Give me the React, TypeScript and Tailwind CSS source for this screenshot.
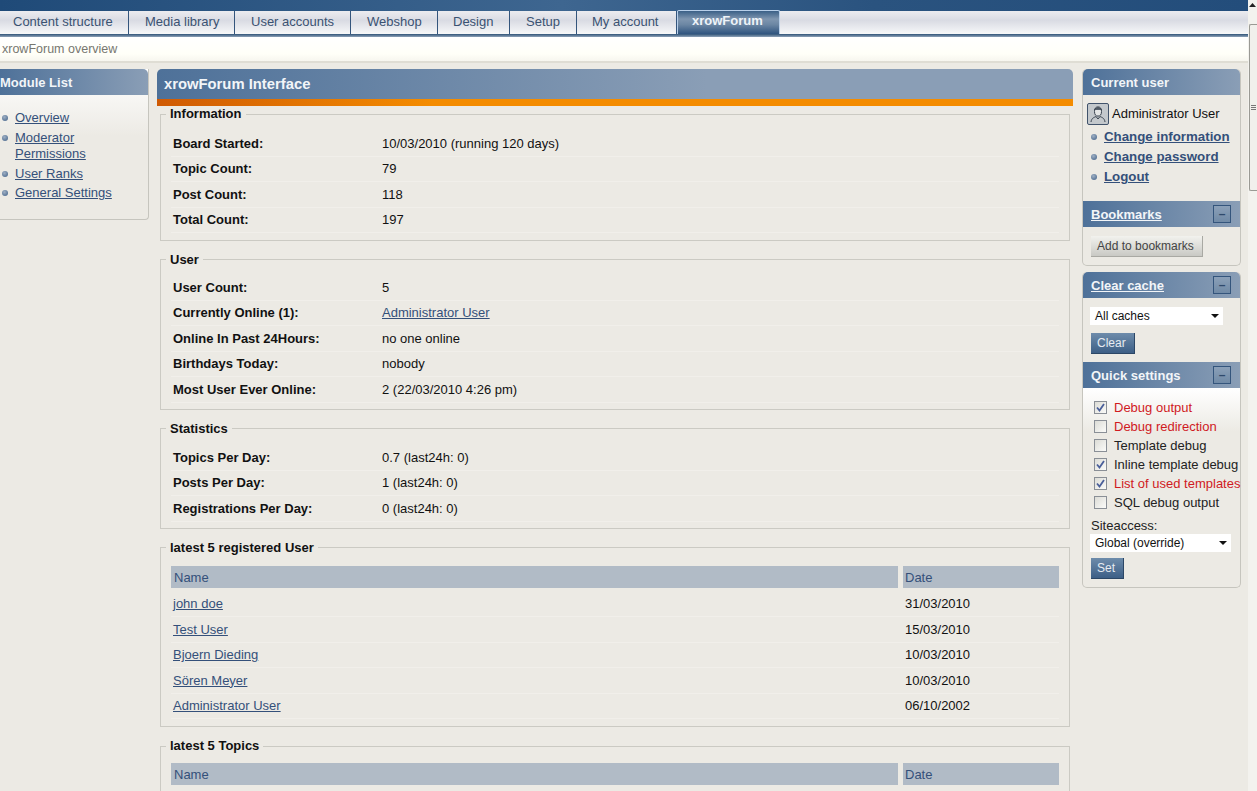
const FONT = "font-['Liberation_Sans',Arial,sans-serif]";

const tabs = [
  { label: "Content structure", cls: "w-[129px] pl-[13px]" },
  { label: "Media library", cls: "w-[106px] pl-[16px]" },
  { label: "User accounts", cls: "w-[116px] pl-[16px]" },
  { label: "Webshop", cls: "w-[87px] pl-[16px]" },
  { label: "Design", cls: "w-[72px] pl-[15px]" },
  { label: "Setup", cls: "w-[67px] pl-[16px]" },
  { label: "My account", cls: "w-[100px] pl-[15px]" },
];

function Bullet() {
  return (
    <span className="block w-[6px] h-[6px] rounded-full shrink-0 bg-[radial-gradient(circle_at_40%_35%,#9fb0c4,#3f5f86)]" />
  );
}

function TabBar() {
  return (
    <div className="h-[23px] flex items-stretch bg-[linear-gradient(#ececf0,#d9dbe3_40%,#f7f8f9)]">
      {tabs.map((t) => (
        <div
          key={t.label}
          className={`flex items-center pb-[2px] border-r border-[#34557c] text-[#3a5272] text-[13px] ${t.cls}`}
        >
          {t.label}
        </div>
      ))}
      <div className="w-[103px] flex items-center pl-[14px] pb-[3px] -mt-[1px] font-bold text-[13px] text-[#eef3f8] rounded-t-[2px] border-x border-t border-[#b9d0ea] bg-[linear-gradient(#3b6087,#7f96b0_35%,#6b86a3_60%,#2f547f)]">
        xrowForum
      </div>
    </div>
  );
}

function Row({ label, value, link }: { label: string; value: string; link?: boolean }) {
  return (
    <div className="h-[25.4px] flex items-center border-b border-[#f1efea] text-[13px] text-[#111]">
      <div className="w-[211px] pl-[2px] font-bold shrink-0">{label}</div>
      {link ? <a className="text-[#34507a] underline">{value}</a> : <div>{value}</div>}
    </div>
  );
}

function Section({ title, className, children }: { title: string; className?: string; children: React.ReactNode }) {
  return (
    <fieldset className={`mx-[3px] mb-[11px] pl-[10px] pr-[10px] border border-[#cbcac3] ${className ?? "pb-[6px]"}`}>
      <legend className="-ml-[5px] px-[4px] font-bold text-[13px] leading-[16px] text-[#111]">{title}</legend>
      {children}
    </fieldset>
  );
}

function TableHead({ className }: { className: string }) {
  return (
    <div className={`flex gap-[5px] text-[13px] text-[#34507a] ${className}`}>
      <div className="w-[727px] h-[22px] pl-[3px] pt-[2px] flex items-center bg-[#b1bbc6]">Name</div>
      <div className="flex-1 h-[22px] pl-[2px] pt-[2px] flex items-center bg-[#b1bbc6]">Date</div>
    </div>
  );
}

function DateRow({ name, date }: { name: string; date: string }) {
  return (
    <div className="h-[25.5px] flex items-center border-b border-[#f1efea] text-[13px]">
      <a className="w-[732px] pl-[2px] shrink-0">
        <span className="text-[#34507a] underline">{name}</span>
      </a>
      <div className="pl-[2px] text-[#111]">{date}</div>
    </div>
  );
}

function Collapse() {
  return (
    <span className="w-[18px] h-[18px] flex items-center justify-center border border-[#34557c] bg-[linear-gradient(#8ba0b8,#708aa6)] text-[#2f4a6c] text-[12px] leading-none">
      –
    </span>
  );
}

function SideHead({ title, link, collapse, rounded }: { title: string; link?: boolean; collapse?: boolean; rounded?: boolean }) {
  return (
    <div className={`h-[26px] pl-[8px] pr-[9px] flex items-center justify-between font-bold text-[13px] text-[#f2f5f8] bg-[linear-gradient(90deg,#4e7199,#8a9eb6)] ${rounded ? "rounded-t-[5px]" : ""}`}>
      <span className={`pt-px ${link ? "underline" : ""}`}>{title}</span>
      {collapse && <Collapse />}
    </div>
  );
}

function Check({ checked, label, red }: { checked?: boolean; label: string; red?: boolean }) {
  return (
    <div className={`h-[19px] flex items-center gap-[7px] whitespace-nowrap text-[13px] ${red ? "text-[#d01a1f]" : "text-[#222]"}`}>
      <span className="w-[13px] h-[13px] shrink-0 flex items-center justify-center border border-[#8a8f96] bg-[linear-gradient(135deg,#dcdcd6,#fbfbf9)]">
        {checked && (
          <svg width="9" height="9" viewBox="0 0 9 9">
            <path d="M1 4.5 L3.5 7.5 L8 1" fill="none" stroke="#4a5f9a" strokeWidth="1.8" />
          </svg>
        )}
      </span>
      {label}
    </div>
  );
}

function FakeSelect({ value, width }: { value: string; width: string }) {
  return (
    <div className={`${width} h-[18px] pl-[5px] pr-[4px] flex items-center justify-between bg-white text-[12px] text-[#111]`}>
      {value}
      <svg width="8" height="4" viewBox="0 0 8 4">
        <path d="M0 0 H8 L4 4 Z" fill="#111" />
      </svg>
    </div>
  );
}

function BlueButton({ label }: { label: string }) {
  return (
    <div className="inline-flex h-[21px] pl-[6px] pr-[8px] items-center text-[12px] text-[#e6ebf1] border-r border-b border-[#2c4766] bg-[linear-gradient(#6e8cab,#3d5f86)]">
      {label}
    </div>
  );
}

function Avatar() {
  return (
    <span className="w-[22px] h-[22px] flex items-center justify-center rounded-[2px] border border-[#41536b] bg-[#c3c8cc]">
      <svg width="18" height="18" viewBox="0 0 18 18" fill="none" stroke="#39434f" strokeWidth="1">
        <ellipse cx="9" cy="6.5" rx="3.5" ry="4.6" fill="#e4e6e6" />
        <path d="M5.5 5 C6 2 12 2 12.5 5" fill="#59636e" />
        <path d="M2 17 C2.5 13 5 12.5 7 11.5 L9 14 L11 11.5 C13 12.5 15.5 13 16 17" />
      </svg>
    </span>
  );
}

function Scrollbar() {
  return (
    <div className="w-[9px] shrink-0 bg-[#f3f2ee] flex flex-col items-stretch">
      <div className="h-[24px] flex justify-center pt-[3px]">
        <svg width="7" height="4" viewBox="0 0 7 4">
          <path d="M0 4 L3.5 0 L7 4 Z" fill="#222" />
        </svg>
      </div>
      <div className="h-[167px] ml-[1px] rounded-l-[2px] border border-r-0 border-[#9a9a94] bg-[#f1f0ec] flex flex-col items-center justify-center gap-[1px]">
        <span className="w-[5px] h-px bg-[#777]" />
        <span className="w-[5px] h-px bg-[#777]" />
        <span className="w-[5px] h-px bg-[#777]" />
      </div>
    </div>
  );
}

function ModuleItem({ className, children }: { className: string; children: React.ReactNode }) {
  return (
    <li className={`flex items-start gap-[7px] pl-[2px] ${className}`}>
      <span className="block pt-[5px]"><Bullet /></span>
      <a className="underline">{children}</a>
    </li>
  );
}

export default function App() {
  return (
    <div className={`${FONT} h-[791px] w-[1257px] overflow-hidden flex bg-[#eceae4]`}>
      <div className="w-[1248px] shrink-0">
        <div className="h-[11px] bg-[linear-gradient(90deg,#1f4a78,#3e6690_45%,#2a537f_70%,#234d7b)]" />
        <TabBar />
        <div className="h-[3px] bg-[linear-gradient(#2f5378,#8fa3b8)]" />
        <div className="h-[24px] pl-[2px] flex items-center text-[12.5px] text-[#777770] bg-[linear-gradient(#ffffff,#fffff8_70%,#f7f6ef)]">
          xrowForum overview
        </div>
        <div className="h-[2px] bg-[#dfddd4]" />
        <div className="h-[6px]" />

        <div className="flex items-start">
          <aside className="w-[149px] h-[151px] shrink-0 border-r border-b border-[#c6c5be] rounded-br-[4px] bg-[linear-gradient(#ffffff,#eceae4_45%)]">
            <div className="h-[26px] pt-px flex items-center font-bold text-[13px] text-[#f2f5f8] rounded-tr-[5px] bg-[linear-gradient(90deg,#4e7199,#8a9eb6)]">
              Module List
            </div>
            <ul className="pt-[15px] text-[13px] text-[#34507a] leading-[16px]">
              <ModuleItem className="h-[20px]">Overview</ModuleItem>
              <ModuleItem className="h-[36px]">Moderator<br />Permissions</ModuleItem>
              <ModuleItem className="h-[19px]">User Ranks</ModuleItem>
              <ModuleItem className="h-[20px]">General Settings</ModuleItem>
            </ul>
          </aside>

          <main className="w-[916px] ml-[8px] shrink-0">
            <div className="h-[30px] pl-[7px] flex items-center font-bold text-[14.8px] text-[#f2f5f8] rounded-t-[5px] bg-[linear-gradient(90deg,#4e7199,#8a9eb6_60%,#8a9eb6)]">
              xrowForum Interface
            </div>
            <div className="h-[7px] bg-[linear-gradient(90deg,#cf5a04,#f48c00_30%)]" />
            <Section title="Information">
              <div className="pt-[9.6px] pb-[0.4px]">
                <Row label="Board Started:" value="10/03/2010 (running 120 days)" />
                <Row label="Topic Count:" value="79" />
                <Row label="Post Count:" value="118" />
                <Row label="Total Count:" value="197" />
              </div>
            </Section>
            <Section title="User">
              <div className="pt-[8px]">
                <Row label="User Count:" value="5" />
                <Row label="Currently Online (1):" value="Administrator User" link />
                <Row label="Online In Past 24Hours:" value="no one online" />
                <Row label="Birthdays Today:" value="nobody" />
                <Row label="Most User Ever Online:" value="2 (22/03/2010 4:26 pm)" />
              </div>
            </Section>
            <Section title="Statistics">
              <div className="pt-[9px]">
                <Row label="Topics Per Day:" value="0.7 (last24h: 0)" />
                <Row label="Posts Per Day:" value="1 (last24h: 0)" />
                <Row label="Registrations Per Day:" value="0 (last24h: 0)" />
              </div>
            </Section>
            <Section title="latest 5 registered User" className="pb-[7px]">
              <TableHead className="mt-[10px]" />
              <div className="pt-[4px]">
                <DateRow name="john doe" date="31/03/2010" />
                <DateRow name="Test User" date="15/03/2010" />
                <DateRow name="Bjoern Dieding" date="10/03/2010" />
                <DateRow name="Sören Meyer" date="10/03/2010" />
                <DateRow name="Administrator User" date="06/10/2002" />
              </div>
            </Section>
            <Section title="latest 5 Topics">
              <TableHead className="mt-[9px]" />
            </Section>
          </main>

          <div className="w-[159px] ml-[9px] shrink-0 text-[13px]">
            <div className="h-[197px] border-x border-b border-[#c6c5be] rounded-[5px]">
              <SideHead title="Current user" rounded />
              <div className="pl-[4px] pt-[8px] flex items-center gap-[3px] text-[#111]">
                <Avatar />
                Administrator User
              </div>
              <div className="pt-[2px] font-bold text-[13.3px] text-[#34507a]">
                {["Change information", "Change password", "Logout"].map((l) => (
                  <div key={l} className="h-[20px] pl-[8px] flex items-center gap-[7px]">
                    <Bullet />
                    <a className="underline">{l}</a>
                  </div>
                ))}
              </div>
              <div className="mt-[14px]">
                <SideHead title="Bookmarks" link collapse />
              </div>
              <div className="pl-[8px] pt-[9px]">
                <div className="inline-flex h-[21px] pl-[6px] pr-[8px] items-center text-[12px] text-[#444] border-r border-b border-[#a9a9a3] bg-[linear-gradient(#f2f2ee,#c9c9c4)]">
                  Add to bookmarks
                </div>
              </div>
            </div>

            <div className="mt-[6px] h-[316px] border-x border-b border-[#c6c5be] rounded-[5px]">
              <SideHead title="Clear cache" link collapse rounded />
              <div className="pl-[7px] pt-[9px]">
                <FakeSelect value="All caches" width="w-[133px]" />
                <div className="mt-[8px] pl-px"><BlueButton label="Clear" /></div>
              </div>
              <div className="mt-[8px]">
                <SideHead title="Quick settings" collapse />
              </div>
              <div className="pl-[11px] pt-[10px] bg-[linear-gradient(#ffffff,#eceae4_35%)]">
                <Check checked red label="Debug output" />
                <Check red label="Debug redirection" />
                <Check label="Template debug" />
                <Check checked label="Inline template debug" />
                <Check checked red label="List of used templates" />
                <Check label="SQL debug output" />
              </div>
              <div className="pl-[7px] pt-[5px]">
                <div className="text-[#222] leading-[17px] pl-px">Siteaccess:</div>
                <FakeSelect value="Global (override)" width="w-[141px]" />
                <div className="mt-[6px] pl-px"><BlueButton label="Set" /></div>
              </div>
            </div>
          </div>
        </div>
      </div>
      <Scrollbar />
    </div>
  );
}
